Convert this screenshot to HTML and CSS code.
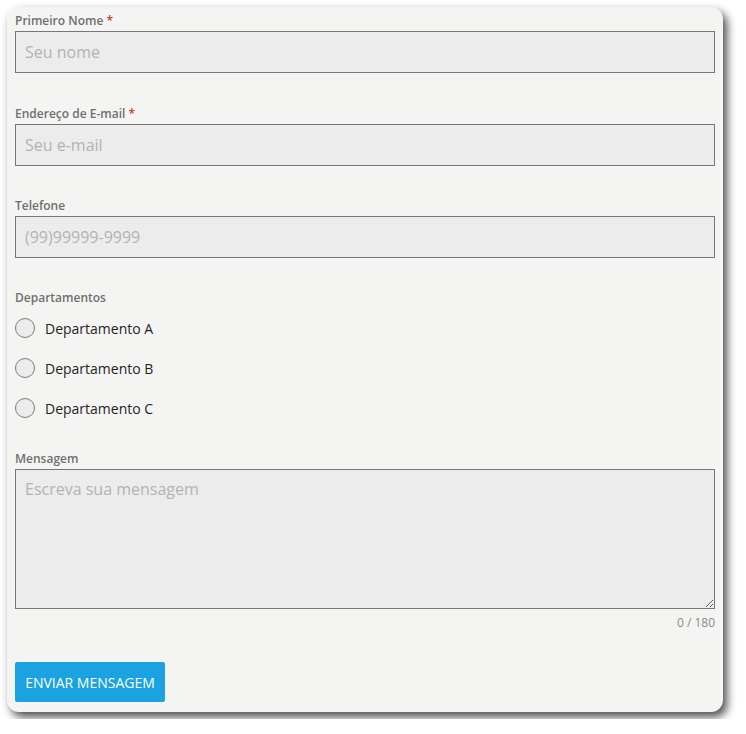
FILE: index.html
```html
<!DOCTYPE html>
<html>
<head>
    <title>Contato</title>
    <meta name="viewport" content="width=device-width, initial-scale=1.0">
    <link rel="stylesheet" href="styles.css">
</head>
<body>
    <div class="card">
        <form class="contact-form">
            <div class="field field-first">
                <label class="field-label" for="nome">Primeiro Nome <span class="req">*</span></label>
                <input type="text" id="nome" class="text-input" placeholder="Seu nome">
            </div>

            <div class="field">
                <label class="field-label" for="email">Endereço de E-mail <span class="req">*</span></label>
                <input type="email" id="email" class="text-input" placeholder="Seu e-mail">
            </div>

            <div class="field">
                <label class="field-label" for="tel">Telefone</label>
                <input type="tel" id="tel" class="text-input" placeholder="(99)99999-9999">
            </div>

            <div class="field field-radios">
                <div class="field-label">Departamentos</div>
                <label class="radio-row"><input type="radio" name="dep" class="radio"> Departamento A</label>
                <label class="radio-row"><input type="radio" name="dep" class="radio"> Departamento B</label>
                <label class="radio-row"><input type="radio" name="dep" class="radio"> Departamento C</label>
            </div>

            <div class="field field-msg">
                <label class="field-label" for="msg">Mensagem</label>
                <textarea id="msg" class="text-input text-area" placeholder="Escreva sua mensagem"></textarea>
                <div class="counter">0 / 180</div>
            </div>

            <button type="button" class="submit-btn">ENVIAR MENSAGEM</button>
        </form>
    </div>
</body>
</html>
```

FILE: styles.css
```css
* {
    margin: 0;
    padding: 0;
    box-sizing: border-box;
    font-family: 'Open Sans', 'Noto Sans', sans-serif;
}

body {
    background: #ffffff;
    padding: 7px;
}

.card {
    width: 716px;
    height: 705px;
    background: #f4f5f2;
    border-radius: 12px;
    padding: 5px 8px 10px;
    box-shadow: 4px 5px 10px rgba(0, 0, 0, 0.7);
}

.field {
    margin-bottom: 31px;
}

.field-first {
    margin-bottom: 32px;
}

.field-label {
    display: block;
    font-size: 12px;
    font-weight: 600;
    line-height: 18px;
    color: #6f6f6f;
    margin-bottom: 1px;
}

.req {
    color: #c0392b;
}

.text-input {
    display: block;
    width: 100%;
    height: 42px;
    background: #ececec;
    border: 1px solid #777777;
    padding: 0 9px;
    font-size: 16px;
    color: #333;
    outline: none;
}

.text-input::placeholder {
    color: #b3b3b3;
}

.text-area {
    height: 140px;
    padding: 8px 9px;
    line-height: 22px;
    resize: vertical;
}

.field-radios {
    margin-bottom: 22px;
}

.radio-row {
    display: flex;
    align-items: center;
    height: 40px;
    font-size: 14px;
    color: #1f1f1f;
    cursor: pointer;
}

.radio {
    appearance: none;
    width: 20px;
    height: 20px;
    border: 1px solid #7a7a7a;
    border-radius: 50%;
    background: #ececec;
    margin-right: 10px;
}

.field-msg {
    margin-bottom: 0;
}

.counter {
    text-align: right;
    font-size: 12px;
    line-height: 18px;
    color: #8a8a8a;
    margin-top: 5px;
}

.submit-btn {
    display: block;
    margin-top: 30px;
    width: 150px;
    height: 40px;
    background: #1aa3e0;
    color: #ffffff;
    border: none;
    border-radius: 2px;
    font-size: 14px;
    cursor: pointer;
}
```
